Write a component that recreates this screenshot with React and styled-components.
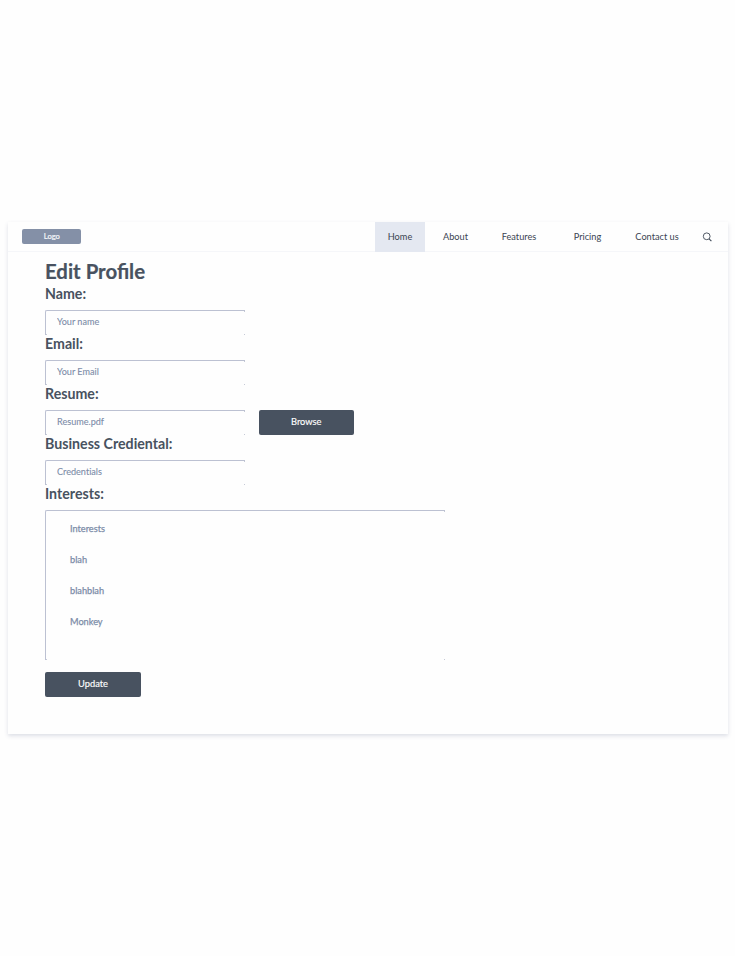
import React from "react";
import styled, { createGlobalStyle } from "styled-components";

const GlobalStyle = createGlobalStyle`
  * { box-sizing: border-box; }
  body {
    margin: 0;
    background: #fefefe;
    font-family: Lato, "Liberation Sans", sans-serif;
    color: #485260;
  }
`;

const Page = styled.div`
  padding: 222px 7px 0 8px;
  height: 956px;
`;

const Card = styled.main`
  width: 720px;
  height: 512px;
  background: #fefefe;
  box-shadow: 0 2px 4px rgba(70, 85, 120, 0.18);
`;

const Header = styled.header`
  display: flex;
  height: 30px;
  border-bottom: 1px solid #f5f6f9;
`;

const Logo = styled.div`
  width: 59px;
  height: 15px;
  margin: 7.4px 0 0 14.4px;
  border-radius: 2px;
  background: #8490a7;
  color: #f4f6fa;
  font-size: 7.6px;
  line-height: 14px;
  text-align: center;
  -webkit-text-stroke: 0.2px currentColor;
`;

const Nav = styled.nav`
  display: flex;
  margin-left: auto;
`;

const NavItem = styled.a`
  width: ${(p) => p.$width}px;
  height: 30px;
  line-height: 30px;
  font-size: 9.2px;
  text-align: center;
  white-space: nowrap;
  color: #3a4452;
  background: ${(p) => (p.$active ? "#e4e8f1" : "transparent")};
`;

const SearchButton = styled.button`
  width: 11px;
  height: 30px;
  margin: 0 15px 0 11px;
  padding: 0;
  border: 0;
  background: none;
  color: #3e4856;
  display: flex;
  align-items: center;
`;

const Form = styled.form`
  padding-left: 37px;
`;

const Title = styled.h1`
  margin: 0;
  height: 33px;
  padding-top: 6px;
  font-size: 20.4px;
  line-height: 27px;
  font-weight: 700;
  white-space: nowrap;
  -webkit-text-stroke: 0.2px currentColor;
`;

const Field = styled.div`
  height: ${(p) => p.$height || 50}px;
`;

const Label = styled.label`
  display: block;
  height: 25px;
  line-height: 17px;
  font-size: 14.2px;
  font-weight: 700;
  white-space: nowrap;
`;

const Row = styled.div`
  display: flex;
  gap: 13.5px;
`;

/* Outlined on the top and left only; the right-hand corners end in small ticks. */
const Outline = styled.div`
  width: ${(p) => p.$width}px;
  height: ${(p) => p.$height}px;
  border-top: 1px solid #bcc1d2;
  border-left: 1px solid #bcc1d2;
  border-top-left-radius: 2px;
  background:
    linear-gradient(#c6cad6, #c6cad6) right top / 1px 1px no-repeat,
    linear-gradient(#c6cad6, #c6cad6) right bottom / 1px 1px no-repeat,
    linear-gradient(#c6cad6, #c6cad6) left bottom / 1px 1px no-repeat;
`;

const Input = styled.input`
  display: block;
  width: 100%;
  height: 21px;
  padding: 0 11px;
  border: 0;
  outline: 0;
  background: transparent;
  font: 9.1px Lato, sans-serif;
  font-variant-ligatures: none;
  color: #7c8ca8;
  -webkit-text-stroke: 0.1px currentColor;
`;

const Options = styled.ul`
  list-style: none;
  margin: 0;
  padding: 2px 0 0 24px;
`;

const Option = styled.li`
  height: 31px;
  line-height: 31px;
  font-size: 9.2px;
  color: #7c8ca8;
  -webkit-text-stroke: 0.25px currentColor;
`;

const Button = styled.button`
  display: block;
  width: ${(p) => p.$width || 96}px;
  height: 25px;
  padding: 0 0 2px;
  border: 0;
  border-radius: 2px;
  background: #485260;
  color: #fdfdfd;
  font: 9.3px Lato, sans-serif;
  -webkit-text-stroke: 0.15px currentColor;
`;

const links = [
  { text: "Home", width: 50, active: true },
  { text: "About", width: 61 },
  { text: "Features", width: 66 },
  { text: "Pricing", width: 71 },
  { text: "Contact us", width: 68 },
];

const fields = [
  { label: "Name:", value: "Your name" },
  { label: "Email:", value: "Your Email" },
  { label: "Resume:", value: "Resume.pdf", action: "Browse" },
  { label: "Business Crediental:", value: "Credentials" },
];

const interests = ["Interests", "blah", "blahblah", "Monkey"];

function SearchIcon() {
  return (
    <svg width="11" height="10" viewBox="0 0 11 10" fill="none" stroke="currentColor">
      <circle cx="4.7" cy="4.3" r="3.4" strokeWidth="0.9" />
      <path d="M7.1 6.8L9.4 9.1" strokeWidth="1.1" />
    </svg>
  );
}

export default function App() {
  return (
    <>
      <GlobalStyle />
      <Page>
        <Card>
          <Header>
            <Logo>Logo</Logo>
            <Nav>
              {links.map((l) => (
                <NavItem key={l.text} $width={l.width} $active={l.active}>
                  {l.text}
                </NavItem>
              ))}
            </Nav>
            <SearchButton type="button" aria-label="Search">
              <SearchIcon />
            </SearchButton>
          </Header>
          <Form>
            <Title>Edit Profile</Title>
            {fields.map((f) => (
              <Field key={f.label}>
                <Label>{f.label}</Label>
                <Row>
                  <Outline $width={200} $height={25}>
                    <Input aria-label={f.label} defaultValue={f.value} />
                  </Outline>
                  {f.action && <Button type="button" $width={95.5}>{f.action}</Button>}
                </Row>
              </Field>
            ))}
            <Field $height={187}>
              <Label>Interests:</Label>
              <Outline $width={400} $height={150}>
                <Options>
                  {interests.map((o) => (
                    <Option key={o}>{o}</Option>
                  ))}
                </Options>
              </Outline>
            </Field>
            <Button type="button">Update</Button>
          </Form>
        </Card>
      </Page>
    </>
  );
}
